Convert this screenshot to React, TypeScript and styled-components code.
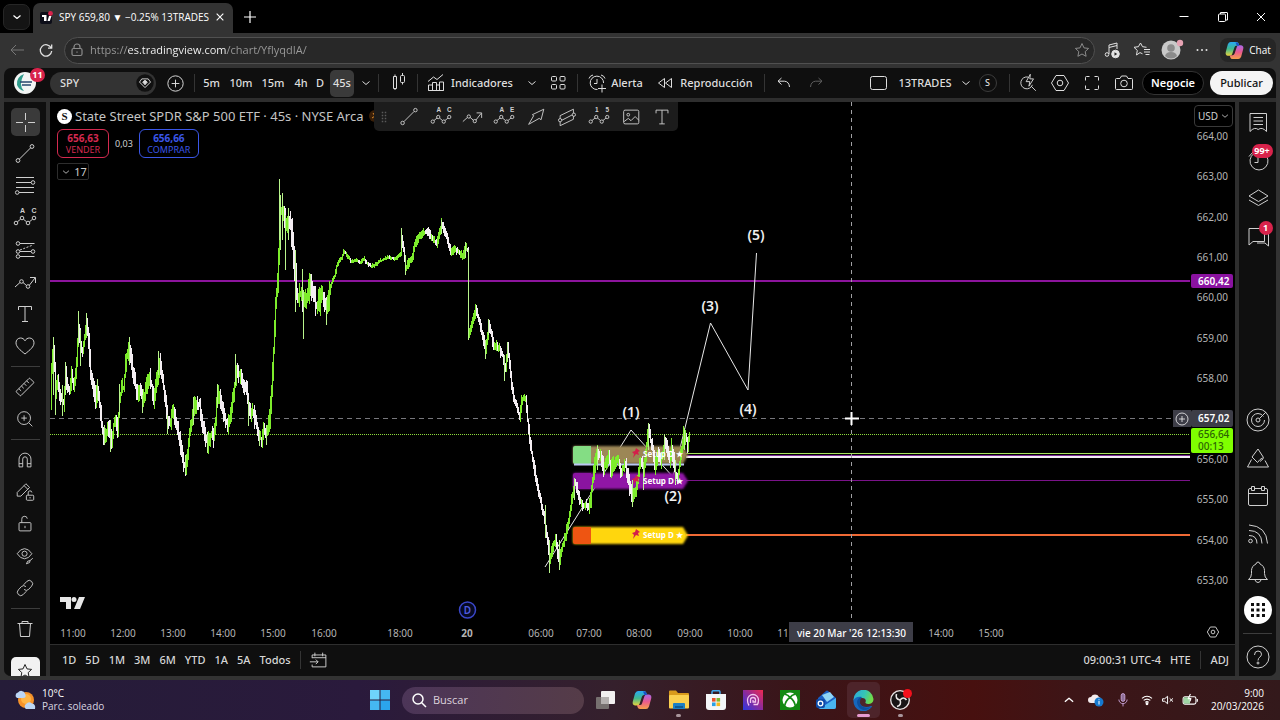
import React from 'react';
import styled, { createGlobalStyle, css } from 'styled-components';

const UI = '"Noto Sans", "Open Sans", sans-serif';
const SYS = '"Open Sans", "Noto Sans", sans-serif';

const GlobalStyle = createGlobalStyle`
  *, *::before, *::after { box-sizing: border-box; }
  body { margin: 0; background: #000; color: #d6d6d6; font-family: ${UI}; font-size: 11px; line-height: 16px; }
  button, input, select { font: inherit; color: inherit; }
  button { margin: 0; padding: 0; border: 0; background: none; display: inline-flex; align-items: center; justify-content: center; white-space: nowrap; }
  svg { display: block; flex: none; }
`;

/* ---------- icons ---------- */

type IconName =
  | 'down' | 'up' | 'close' | 'plus' | 'min' | 'restore' | 'back' | 'reload' | 'padlock' | 'star' | 'music' | 'favs' | 'dots'
  | 'gem' | 'plusCircle' | 'candles' | 'indicators' | 'grid' | 'alarm' | 'rewind' | 'undo' | 'redo' | 'square' | 'quick'
  | 'hex' | 'fullscreen' | 'camera' | 'cross' | 'trend' | 'fib' | 'abc' | 'fork' | 'path' | 'text' | 'heart' | 'ruler'
  | 'zoom' | 'magnet' | 'pencilLock' | 'lock' | 'eye' | 'link' | 'trash' | 'abcde' | 'arrow' | 'channel' | 'impulse'
  | 'image' | 'grip' | 'watchlist' | 'clock' | 'layers' | 'chat' | 'radar' | 'pyramid' | 'calendar' | 'feed' | 'bell'
  | 'apps' | 'help' | 'goto' | 'search' | 'mic' | 'wifi' | 'mute' | 'battery';

const zig = (
  <>
    <circle cx="3" cy="17" r="1.8" /><circle cx="9" cy="12" r="1.8" /><circle cx="15" cy="17" r="1.8" /><circle cx="21" cy="12" r="1.8" />
    <path d="M4.4 15.8l3.2-2.6M10.4 13.2l3.2 2.6M16.4 15.8l3.2-2.6" />
  </>
);
const pair = (a: string, b: string) => (
  <g fill="currentColor" stroke="none" fontFamily="Liberation Sans, sans-serif" fontWeight="700" fontSize="7" textAnchor="middle">
    <text x="9.500" y="7">{a}</text>
    <text x="21" y="7">{b}</text>
  </g>
);

const glyphs: Record<IconName, React.ReactNode> = {
  down: <path d="M8.500 10.500l3.500 3 3.500-3" />,
  up: <path d="M7.500 14l4.500-4 4.500 4" />,
  close: <path d="M8 8l8 8M16 8l-8 8" />,
  plus: <path d="M12 6v12M6 12h12" />,
  min: <path d="M7.500 11.500h9" />,
  restore: <><rect x="7.500" y="9" width="7" height="7.500" rx="1" /><path d="M9.500 9V7.500h6.500q.5 0 .5.500V15h-2" /></>,
  back: <path d="M6 12h13M11 7l-5 5 5 5" />,
  reload: <path d="M17.200 10A5.700 5.700 0 1 0 17.700 13M17.700 6.500V10.200H14" />,
  padlock: <><rect x="7" y="10.500" width="10" height="7" rx="1.500" /><path d="M9 10.500V9a3 3 0 0 1 6 0v1.500M12 13.500v1.200" /></>,
  star: <path d="M12 5.500l2 4.400 4.600.5-3.400 3.200.9 4.700L12 16l-4.100 2.300.9-4.700-3.400-3.200 4.600-.5z" />,
  music: <><path d="M9 16V7l8-2v6M9 9.500l8-2" /><circle cx="7" cy="16.500" r="1.800" /><circle cx="15.500" cy="16" r="3.800" fill="currentColor" /><path d="M14.500 14.300v3.400l2.700-1.700z" fill="#222" stroke="none" /></>,
  favs: <><path d="M12.500 15.800L10 14.600 6.500 17l.8-4.600L4 9.300l4.400-.6L10.500 5l2 3.700 4 .6" /><path d="M14 11.500h6M14 14h6M15.500 16.500h4" /></>,
  dots: <g fill="currentColor" stroke="none"><circle cx="7.500" cy="12" r="1" /><circle cx="12" cy="12" r="1" /><circle cx="16.500" cy="12" r="1" /></g>,
  gem: <><circle cx="12" cy="12" r="9.500" fill="#111" stroke="none" /><path d="M8.500 7.500h7l2.500 3.500-6 6-6-6z" /><path d="M9.500 11l2.500-2 2.500 2-2.500 3z" fill="currentColor" /></>,
  plusCircle: <><circle cx="12" cy="12" r="8" /><path d="M12 8v8M8 12h8" /></>,
  candles: <><rect x="7.500" y="5.500" width="3" height="12" /><path d="M9 3.500v2M9 17.500V19" /><rect x="14.500" y="4.500" width="4" height="7" rx="1" /><path d="M16.500 2v2.500M16.500 11.500v2" /></>,
  indicators: <><path d="M4.500 19.500V14h4v5.500zM8.500 19.500v-8h4v8M12.500 14h3v5.500M15.500 19.500V11h4v8.500zM4.500 19.500h15" /><path d="M4 10.500L9.500 6l3.500 2.500 6-5" /></>,
  grid: <><rect x="5.500" y="5.500" width="5" height="4.500" rx="1" /><rect x="14" y="5.500" width="5" height="4.500" rx="1" /><rect x="5.500" y="13.500" width="5" height="4.500" rx="1" /><rect x="14" y="13.500" width="5" height="4.500" rx="1" /></>,
  alarm: <><path d="M18.600 12A6.700 6.700 0 1 0 12.500 18.500" /><path d="M12 8v4.500H9M4 7.500Q5 4.500 8 4M16 4q3 .5 4 3.500M17 13.500v8M13 17.500h8" /></>,
  rewind: <path d="M11.500 7.500v9L5.500 12zM18.500 7.500v9l-6-4.500z" />,
  undo: <path d="M9.500 7L6 10.200l3.500 3.300M6 10.200h6.500Q17 10.500 17.500 16" />,
  redo: <path d="M14.500 7l3.500 3.200-3.500 3.300M18 10.200h-6.500Q7 10.500 6.500 16" />,
  square: <rect x="3.500" y="5.500" width="16" height="13" rx="2" />,
  quick: <><path d="M12 5.500A6.500 6.500 0 1 0 16.800 14M15.500 15.500l5 5" /><path d="M14.500 2.500L10 10.500h4l-1 5 5-8h-4z" /></>,
  hex: <><path d="M8 4.500h8l4.500 7.500-4.500 7.500H8L3.500 12z" /><circle cx="12" cy="12" r="2.800" /></>,
  fullscreen: <path d="M5.500 9.500v-3q0-1 1-1h3M14.500 5.500h3q1 0 1 1v3M18.500 14.500v3q0 1-1 1h-3M9.500 18.500h-3q-1 0-1-1v-3" />,
  camera: <><path d="M4.500 7.500h3.500l1.500-2.500h5L16 7.500h3.500q1 0 1 1v9q0 1-1 1h-15q-1 0-1-1v-9q0-1 1-1z" /><circle cx="12" cy="12.500" r="3.300" /></>,
  cross: <path d="M3 12.500h7M15 12.500h7M12.500 3v7M12.500 15v7" />,
  trend: <><circle cx="5" cy="18.500" r="1.900" /><circle cx="19" cy="4.500" r="1.900" /><path d="M6.400 17.100L17.600 5.900" /></>,
  fib: <><path d="M3 3.500h18M3 8.500h15M3 13.500h18M6 18.500h15" /><circle cx="20" cy="8.500" r="1.800" /><circle cx="4.200" cy="18.500" r="1.800" /></>,
  abc: <>{zig}{pair('A', 'C')}</>,
  abcde: <>{zig}{pair('A', 'E')}</>,
  impulse: <>{zig}{pair('1', '5')}</>,
  fork: <><circle cx="5" cy="5.500" r="1.800" /><circle cx="5" cy="13.500" r="1.800" /><circle cx="20" cy="13.500" r="1.800" /><circle cx="5" cy="18.500" r="1.800" /><path d="M7 5.500h14.500M7 13.500h11M7 18.500h14.500" /><path d="M7 12l13-5" strokeDasharray="2 1.500" /></>,
  path: <><path d="M2 17l5-4.500M10 12.500l3.500 3M16.300 15.300L22 8M17 7.500h5.500V13" /><circle cx="8.500" cy="11.500" r="1.800" /><circle cx="15" cy="16.500" r="1.800" /></>,
  text: <path d="M5.500 8V4.500h13V8M12 4.500v15M9 19.500h6" />,
  heart: <path d="M12 20C7 16 3 12.800 3 8.800 3 6 5 4 7.500 4 9.500 4 11 5 12 6.800 13 5 14.500 4 16.500 4 19 4 21 6 21 8.800c0 4-4 7.200-9 11.200z" />,
  ruler: <g transform="rotate(-45 12 12)"><rect x="1.500" y="8.500" width="21" height="7" rx="1" /><path d="M6 8.500V12M10 8.500V12M14 8.500V12M18 8.500V12" /></g>,
  zoom: <><circle cx="11" cy="11" r="7" /><path d="M16 16l4 4M11 8v6M8 11h6" /></>,
  magnet: <><path d="M5.500 19.500V11a6.500 6.500 0 0 1 13 0v8.500h-4V11a2.500 2.500 0 0 0-5 0v8.500zM5.500 16h4M14.500 16h4" /></>,
  pencilLock: <><path d="M3.500 16.500v-4L13 3l4 4-9.500 9.500zM11 5l4 4" /><rect x="13.500" y="15.500" width="8" height="5.500" rx="1" /><path d="M15.500 15.500V13a2 2 0 0 1 4-.5M17.500 17.500v1.500" /></>,
  lock: <><rect x="5.500" y="10.500" width="13" height="9" rx="1" /><path d="M8.500 10.500V7a3 3 0 0 1 6-.8M12 14v2.500" /></>,
  eye: <><path d="M3.500 9.500Q7 4 11.500 4t8 5.500Q16 15 11.500 15t-8-5.500z" /><circle cx="11.500" cy="9.500" r="2.800" /><path d="M13.500 20.500q1-4 4-3.500 1 2.500-4 3.500zM17.500 17l3-2.500" /></>,
  link: <><path d="M10.500 8.500l3.500-3.700a3.600 3.600 0 0 1 5.200 5.200L16 13.500a3.600 3.600 0 0 1-5 0" /><path d="M13.500 15.500L10 19.200A3.600 3.600 0 0 1 4.800 14L8 10.500a3.600 3.600 0 0 1 5 0" /></>,
  trash: <path d="M4.500 6.500h15M9 6.500v-2h6v2M6.500 6.500l1 13h9l1-13" />,
  arrow: <path d="M4 20l5.500-9.500L8 9.500 20.500 3.500 17.500 15l-2-1.500z" />,
  channel: <><path d="M4.500 10.500L19 3.500v11l-14.500 7z M5.500 16L19 9" /><circle cx="4.500" cy="15.500" r="1.800" fill="#1c1c1c" /><circle cx="19.500" cy="9.500" r="1.800" fill="#1c1c1c" /></>,
  image: <><rect x="4" y="4.500" width="16.500" height="15" rx="1.500" /><circle cx="9" cy="9.500" r="1.500" /><path d="M4.500 17l4.500-3.500 3 2.500 4.500-4.500 4 4" /></>,
  grip: <g fill="#5a5a5a" stroke="none">{[6, 10, 14, 18].map((y) => <React.Fragment key={y}><rect x="9" y={y - 1} width="2" height="2" /><rect x="13" y={y - 1} width="2" height="2" /></React.Fragment>)}</g>,
  watchlist: <path d="M4 3.500h16.500v18Q16 16.500 12.200 19.500 8.500 16.500 4 21.500zM7.500 7.500h9.500M7.500 11h9.500M7.500 14.500h9.500" />,
  clock: <><path d="M18 5.500a9 9 0 1 1-10 0M12 8.500v6H8.500M3 8.500L7 4" /></>,
  layers: <path d="M12.500 4L22 10l-9.500 5.500L3 10zM3 14l9.500 5.500L22 14" />,
  chat: <><path d="M3 4.500h15.500v13H7l-4 3.500z" /><path d="M21 9.500h1.500V22l-3.500-3h-8" /></>,
  radar: <><circle cx="12" cy="12" r="11" /><circle cx="12" cy="12" r="6.500" strokeDasharray="36 5" /><circle cx="12" cy="12" r="2" /><path d="M13.500 10.500L20 4" /></>,
  pyramid: <path d="M12 3l5.500 8.500-3.500 2-2.500 3-5.500-5.500zM5.500 13.500L1.500 21h21L19 14.500M14 15.500l3.500-3" />,
  calendar: <><rect x="2.500" y="4.500" width="19" height="17" rx="1.500" /><path d="M2.500 9.500h19" /><rect x="5.500" y="2.500" width="3" height="4" fill="#0f0f0f" /><rect x="15.500" y="2.500" width="3" height="4" fill="#0f0f0f" /></>,
  feed: <><circle cx="4.500" cy="19" r="1.800" /><path d="M3 13.500q8 0 8 8M3 8.500q12.500 0 13 13M3 3Q20.500 4 21.500 21.500" /></>,
  bell: <path d="M2.500 19.500h19q-3-2-3-6v-3c0-3-2-5.500-4.500-6.500Q13.500 2 12 2t-2 2C7.500 5 5.500 7.500 5.500 10.500v3q0 4-3 6zM9 20q1 2.500 3 2.500T15 20" />,
  apps: <g fill="#0f0f0f" stroke="none">{[5, 10.500, 16].map((y) => [5, 10.500, 16].map((x) => <rect key={`${x}-${y}`} x={x} y={y} width="3" height="3" />))}</g>,
  help: <><circle cx="12" cy="12" r="11" /><path d="M8.500 10q0-4 3.500-4t3.500 3.200c0 2.800-3.500 3-3.500 6.300" /><circle cx="12" cy="18" r="1" /></>,
  goto: <><path d="M4.500 10V6.500h15v13h-15V17M7.500 4v4M16 4v4M4.500 9.500h15M2 14h9M8.500 11.500L11 14l-2.500 2.500" /></>,
  search: <><circle cx="11" cy="11" r="5" /><path d="M14.700 14.700L19 19" /></>,
  mic: <><rect x="10" y="5" width="4" height="8.500" rx="2" fill="#8d6f96" /><path d="M7.500 11.500a4.500 4.500 0 0 0 9 0M12 16v3" /></>,
  wifi: <><path d="M6 10q6-5 12 0M8 12.500q4-3.300 8 0M10 14.800q2-1.600 4 0" /><circle cx="12" cy="16.500" r="1" fill="currentColor" /></>,
  mute: <><path d="M5.500 10.500h2.500l3.500-3v9l-3.500-3H5.500zM14 10l4 4M18 10l-4 4" /></>,
  battery: <><rect x="4.500" y="8.500" width="14" height="8" rx="2" /><rect x="5" y="9" width="7" height="7" fill="#9fd6a4" stroke="none" /><path d="M20 11v3" /><path d="M12.500 5.500L10 10.500h3l-1 3" stroke="#fff" /></>,
};

const Icon = ({ name, size = 24, weight = 1 }: { name: IconName; size?: number; weight?: number }) => (
  <svg width={size} height={size} viewBox="0 0 24 24" fill="none" stroke="currentColor" strokeWidth={weight} strokeLinejoin="round" aria-hidden="true">
    {glyphs[name]}
  </svg>
);

/* ---------- browser chrome ---------- */

const Shell = styled.div`display: flex; flex-direction: column; height: 100vh; min-height: 560px; overflow: hidden;`;

const TitleBar = styled.header`
  display: flex; align-items: flex-end; height: 33px; flex: none; padding-left: 3px; background: #000;
  font-family: ${SYS}; color: #fff;
`;
const TabSearch = styled.button`width: 27px; height: 26px; margin: 0 3px 3px 0; border: 1px solid #262626; border-radius: 7px; background: #141414; align-self: flex-end;`;
const Tab = styled.div`display: flex; align-items: center; width: 200px; height: 30px; padding: 0 4px 2px 7px; border-radius: 7px 7px 0 0; background: #333;`;
const TabTitle = styled.span`flex: 1; padding-left: 6px; font-size: 10px; white-space: nowrap;`;
const WindowControls = styled.div`display: flex; margin-left: auto; height: 33px;`;
const IconButton = styled.button<{ $w?: number; $h?: number; $c?: string }>`
  width: ${(p) => p.$w ?? 24}px; height: ${(p) => p.$h ?? 24}px; flex: none; color: ${(p) => p.$c ?? 'inherit'};
`;

const AddressRow = styled.div`
  display: flex; align-items: center; height: 34px; flex: none; padding: 0 4px 0 5px; background: #333; color: #e2e2e2; font-family: ${SYS};
`;
const AddressBox = styled.label`
  display: flex; align-items: center; flex: 1; height: 27px; margin-left: 1px; padding: 0;
  border: 1px solid #505050; border-radius: 14px; background: #282828; color: #8c8c8c;
`;
const UrlInput = styled.input`
  flex: 1; min-width: 0; border: 0; padding: 0; margin-left: 1px; outline: 0; font-size: 11px; color: #fff;
  background: linear-gradient(90deg, #9c9c9c 0 38px, #fff 38px 137px, #9c9c9c 137px);
  background-clip: text; -webkit-background-clip: text; -webkit-text-fill-color: transparent;
`;
const Actions = styled.div`display: flex; align-items: center; gap: 6px; padding-left: 5px;`;
const CopilotChat = styled.button`gap: 5px; height: 24px; width: 56px; border-radius: 8px; background: #262626; font-size: 10px; color: #fff;`;

/* ---------- trading page ---------- */

const Frame = styled.div`flex: 1; min-height: 0; display: flex; padding: 1px 4px 4px 4px; background: #333;`;
const Page = styled.div`display: flex; flex-direction: column; flex: 1; min-width: 0; border-radius: 7px; overflow: hidden; background: #0f0f0f;`;
const TopBar = styled.nav`
  display: flex; align-items: center; height: 30px; flex: none; padding: 0 3px 0 10px; font-size: 11px; font-weight: 500; color: #dedede;
`;
const Avatar = styled.button`
  position: relative; width: 22px; height: 22px; border-radius: 50%; background: #f2f5f4; margin-right: 14px;
`;
const Badge = styled.span<{ $top: number; $right: number; $w?: number }>`
  position: absolute; top: ${(p) => p.$top}px; right: ${(p) => p.$right}px; width: ${(p) => p.$w ?? 14}px; height: 14px; border-radius: 7px;
  background: #d8234b; color: #fff; font-size: 9px; font-weight: 700; line-height: 14px; text-align: center;
`;
const SymbolButton = styled.button`
  width: 106px; height: 23px; padding: 0 0 0 10px; border-radius: 12px; background: #333; justify-content: space-between;
`;
const Sep = styled.i<{ $m?: number; $h?: number }>`width: 1px; height: ${(p) => p.$h ?? 18}px; flex: none; margin: 0 ${(p) => p.$m ?? 0}px; background: #343434;`;
const BarButton = styled.button<{ $w: number; $on?: boolean; $gap?: number }>`
  width: ${(p) => p.$w}px; height: 27px; flex: none; gap: ${(p) => p.$gap ?? 0}px; border-radius: 5px;
  ${(p) => p.$on && css`background: #3a3a3a;`}
`;
const Round = styled.span`width: 18px; height: 18px; border: 1px solid #3c3c3c; border-radius: 50%; font-size: 9px; line-height: 16px; text-align: center;`;
const Pill = styled.button<{ $light?: boolean; $w: number }>`
  width: ${(p) => p.$w}px; height: 24px; border-radius: 12px; font-size: 11px; font-weight: 600;
  & + & { margin-left: 6px; }
  ${(p) => (p.$light ? css`background: #f4f4f4; color: #111; font-weight: 500;` : css`background: #000; color: #fff; border: 1px solid #333;`)}
`;
const Grow = styled.div`flex: 1;`;

const Body = styled.div`
  flex: 1; min-height: 0; display: grid; grid-template-columns: 42px minmax(0, 1fr) 37px; gap: 4px; border-top: 4px solid #2e2e2e; background: #2e2e2e;
`;
const Side = styled.aside<{ $top: number }>`
  display: flex; flex-direction: column; align-items: center; min-height: 0; overflow: hidden; padding-top: ${(p) => p.$top}px; background: #0f0f0f; color: #cfcfcf;
`;
const Tool = styled.button<{ $on?: boolean }>`
  width: 29px; height: 28px; margin: 2px 0; flex: none; border-radius: 5px;
  ${(p) => p.$on && css`background: #3a3a3a;`}
`;
const FavButton = styled(Tool)`margin-top: 12px; background: #f2f2f2; color: #222;`;
const SideRule = styled.i`width: 29px; height: 1px; flex: none; margin: 4px 0; background: #3d3d3d;`;
const Widget = styled.button<{ $light?: boolean }>`
  position: relative; width: 28px; height: 28px; margin: 5px 0; flex: none; border-radius: 50%;
  ${(p) => p.$light && css`background: #fff;`}
`;

const Center = styled.main`display: flex; flex-direction: column; min-width: 0; min-height: 0; background: #000;`;
const ChartArea = styled.section`position: relative; flex: 1; min-height: 0; display: grid; grid-template-columns: minmax(0, 1fr) 45px; grid-template-rows: minmax(0, 1fr) 24px; overflow: hidden;`;
const Plot = styled.svg`width: 100%; height: 100%; min-height: 0; overflow: hidden; font-family: ${UI};`;
const Scale = styled.div`
  position: relative; display: flex; flex-direction: column; justify-content: space-between; padding: 26px 7px 32px 0; text-align: right;
  font-size: 10px; line-height: 16px; color: #b4b4b4;
`;
const PriceTag = styled.div<{ $y: number; $bg: string; $fg?: string; $h?: number }>`
  position: absolute; top: ${(p) => p.$y}px; left: 1px; width: 42px; height: ${(p) => p.$h ?? 14}px; padding-left: 7px; border-radius: 2px; text-align: left;
  background: ${(p) => p.$bg}; color: ${(p) => p.$fg ?? '#fff'}; font-weight: ${(p) => (p.$fg ? 500 : 600)}; line-height: ${(p) => (p.$h === 25 ? 12 : p.$h ?? 14)}px;
`;
const AddAtPrice = styled.button`position: absolute; top: 308px; left: -17px; width: 18px; height: 17px; background: #3d3d47; color: #fff;`;
const Currency = styled.div`
  position: absolute; top: 3px; right: 2px; width: 39px; height: 22px; border: 1px solid #3a3a3a; border-radius: 4px; background: #000; display: flex; align-items: center; color: #cfcfcf;
  select { appearance: none; width: 100%; height: 20px; padding: 0 0 0 3px; border: 0; background: none; font-size: 10px; outline: 0; }
  svg { position: absolute; right: -3px; pointer-events: none; }
`;
const AxisSettings = styled.button`height: 24px; width: 45px; color: #c4c4c4;`;

const Legend = styled.div`position: absolute; top: 5px; left: 7px; display: flex; flex-direction: column; align-items: flex-start;`;
const TitleRow = styled.h1`display: flex; align-items: center; gap: 3px; height: 18px; margin: 0 0 4px; font-size: 13px; font-weight: 400; color: #c4c4c4; white-space: nowrap;`;
const Logo = styled.span`width: 15px; height: 15px; border-radius: 50%; background: #fff; color: #111; font: 700 11px/15px "Liberation Serif", serif; text-align: center;`;
const Trade = styled.div`display: flex; align-items: center; gap: 6px; margin-bottom: 5px; font-size: 9px; color: #cfcfcf;`;
const TradeButton = styled.button<{ $c: string; $w: number }>`
  flex-direction: column; width: ${(p) => p.$w}px; height: 29px; border: 1px solid ${(p) => p.$c}; border-radius: 6px; color: ${(p) => p.$c};
  font-size: 9px; line-height: 11px;
  b { font-size: 10px; line-height: 12px; }
`;
const Fold = styled.button`width: 32px; height: 17px; border: 1px solid #2d2d2d; border-radius: 2px; font-size: 11px; color: #cfcfcf; padding-right: 3px;
  svg { margin-right: -2px; }
`;
const DrawBar = styled.div`
  position: absolute; top: 0; left: 324px; display: flex; align-items: center; width: 304px; height: 29px; border-radius: 0 0 5px 5px; background: #1c1c1c; color: #cfcfcf;
`;
const DrawTool = styled.button`flex: 1; height: 29px;`;
const GripHandle = styled.span`width: 19px; display: flex; justify-content: center;`;

const RangeBar = styled.footer`
  display: flex; align-items: center; height: 32px; flex: none; padding: 0 2px 2px 7px; border-top: 1px solid #2e2e2e; background: #0f0f0f; font-size: 11px; font-weight: 500; color: #d6d6d6;
`;
const RangeButton = styled.button`padding: 0 4px 0 5px; height: 24px;`;

/* ---------- chart data ---------- */

// x, y pairs along the session's price path
const trail = [
  50,400, 51,365, 53,350, 55,392, 57,378, 59,392, 61,398, 63,403, 65,372, 67,388, 69,392, 71,372, 73,386, 75,374, 77,345, 78,325, 80,346, 82,352,
  84,336, 86,322, 88,342, 90,372, 92,386, 94,393, 95,400, 97,388, 99,405, 101,423, 103,436, 105,438, 107,428, 109,432, 111,440, 113,424, 115,420,
  117,432, 119,402, 121,388, 123,388, 125,362, 127,352, 129,350, 131,362, 133,374, 135,386, 137,398, 139,388, 142,402, 144,394, 146,386, 149,377,
  151,386, 153,400, 155,388, 157,376, 159,362, 161,372, 163,388, 165,403, 167,422, 169,424, 171,416, 173,412, 175,420, 178,436, 180,445, 182,460,
  184,466, 185,470, 187,456, 189,430, 191,422, 193,408, 195,404, 197,404, 199,404, 201,420, 203,430, 205,438, 207,444, 209,438, 211,434, 213,438,
  215,420, 217,394, 219,396, 221,405, 224,418, 227,426, 230,416, 232,400, 234,386, 236,368, 238,376, 240,376, 243,384, 246,390, 248,408, 250,414,
  252,410, 254,420, 257,430, 259,438, 261,438, 263,432, 265,434, 267,428, 269,416, 271,390, 273,352, 275,305, 277,285, 278,255, 279,215, 281,210,
  283,212, 285,230, 287,222, 289,222, 291,232, 293,255, 295,278, 297,300, 299,296, 301,292, 303,302, 305,300, 308,290, 310,284, 312,292, 315,304,
  317,304, 320,300, 322,298, 324,304, 326,312, 328,300, 330,286, 332,280, 334,276, 336,266, 338,261, 341,258, 343,251, 346,254, 350,261, 355,260,
  360,262, 363,258, 367,264, 370,266, 375,264, 380,260, 388,257, 395,258, 400,254, 401,238, 403,250, 405,268, 408,262, 412,257, 414,244, 418,237,
  422,232, 427,232, 432,238, 436,244, 439,232, 441,223, 443,230, 447,240, 450,252, 454,249, 458,252, 462,257, 465,248, 467,250, 468,334, 470,330,
  473,318, 475,309, 478,320, 482,335, 485,352, 487,335, 488,326, 491,334, 493,348, 496,346, 499,350, 502,356, 505,370, 507,348, 508,356, 511,385,
  513,400, 516,405, 519,417, 521,400, 525,398, 527,420, 529,440, 532,458, 535,478, 540,500, 544,520, 547,542, 549,562, 551,552, 555,538, 557,553,
  559,560, 561,550, 565,535, 568,520, 571,500, 574,483, 576,487, 579,500, 582,505, 585,505, 588,508, 590,500, 592,480, 594,465, 597,453, 600,456,
  603,468, 606,460, 608,456, 610,469, 613,463, 616,461, 618,460, 621,474, 624,463, 626,470, 629,488, 631,496, 632,500, 635,490, 638,470, 640,460,
  643,470, 645,455, 647,436, 648,430, 650,440, 652,450, 654,466, 657,455, 660,463, 662,454, 664,440, 666,448, 669,459, 671,447, 673,460, 675,476,
  677,478, 679,466, 681,450, 683,434, 685,437, 687,444, 689,436,
];
// wicks that reach well beyond the path: x, high, low
const spikes = [
  [53, 337, 395], [55, 380, 415], [62, 385, 416], [65, 362, 395], [78, 311, 345], [80, 330, 366], [86, 313, 335], [104, 425, 445], [110, 420, 452], [97, 379, 400],
  [129, 337, 365], [119, 384, 415], [142, 395, 413], [158, 351, 375], [167, 415, 434], [185, 455, 474], [193, 397, 425], [207, 435, 453], [217, 384, 408], [235, 354, 385],
  [248, 400, 426], [259, 430, 446], [266, 425, 445], [279, 179, 240], [280, 195, 250], [282, 193, 240], [285, 215, 270], [288, 208, 240], [302, 269, 300],
  [303, 290, 339], [310, 274, 296], [326, 300, 325], [295, 250, 312], [401, 228, 250], [405, 255, 275], [441, 220, 234], [465, 242, 258], [468, 250, 340],
  [485, 340, 359], [488, 319, 335], [504, 355, 381], [507, 342, 362], [545, 505, 538], [549, 540, 573], [559, 540, 570], [574, 478, 500], [597, 446, 470],
  [632, 480, 507], [643, 462, 490], [648, 423, 450], [664, 434, 460], [675, 460, 484], [684, 428, 450],
];

const hash = (n: number) => { const v = Math.sin(n * 12.9898) * 43758.5453; return v - Math.floor(v); };
const spread = (x: number) => (x < 270 ? 9 : x < 330 ? 14 : x < 400 ? 2 : x < 467 ? 4 : x < 590 ? 5 : 8);
const OX = 50, OY = 102;

const bars = (() => {
  let up = '', down = '';
  let k = 0;
  const at = (x: number) => {
    while (k < trail.length - 4 && trail[k + 2] < x) k += 2;
    const [x0, y0, x1, y1] = trail.slice(k, k + 4);
    return y0 + ((y1 - y0) * (x - x0)) / (x1 - x0);
  };
  let prev = at(50);
  for (let x = 51; x <= 689; x++) {
    const y = at(x);
    const s = spread(x);
    const pad = s > 2 ? 1 : 0;
    const hi = Math.min(prev, y) - pad - hash(x) * s;
    const lo = Math.max(prev, y) + 1 + hash(x + 500) * s;
    const seg = `M${x - OX + 0.5} ${Math.round(hi) - OY}V${Math.round(lo) - OY}`;
    const rising = y < prev || (Math.abs(y - prev) < 2 && hash(x + 90) > 0.5);
    if (rising) up += seg; else down += seg;
    prev = y;
  }
  return { up, down };
})();

const hours: [string, number][] = [
  ['11:00', 23], ['12:00', 73], ['13:00', 123], ['14:00', 173], ['15:00', 223], ['16:00', 274], ['18:00', 350], ['20', 417], ['06:00', 491],
  ['07:00', 539], ['08:00', 589], ['09:00', 640], ['10:00', 690], ['11', 733], ['14:00', 891], ['15:00', 941],
];
const waves: [string, number, number][] = [['(1)', 581, 315], ['(2)', 623, 399], ['(3)', 660, 209], ['(4)', 698, 312], ['(5)', 706, 138]];
const prices = Array.from({ length: 12 }, (_, i) => `${664 - i},00`);

const SetupBand = ({ y, h, head, fill }: { y: number; h: number; head: string; fill: string }) => (
  <g>
    <path d={`M525 ${y}h108l5 ${h / 2}l-5 ${h / 2}H525q-2 0-2-2V${y + 2}q0-2 2-2z`} fill={fill} filter="url(#soft)" />
    <path d={`M541 ${y}v${h}h-16q-2 0-2-2V${y + 2}q0-2 2-2z`} fill={head} />
  </g>
);
const SetupText = ({ y }: { y: number }) => (
  <g>
    <path d={`M582 ${y - 2}l3-1 1-3 4 3-2 1 1 3-3-1-3 4 1-4z`} fill="#d3204a" />
    <text x="593" y={y + 3} fontSize="8" fontWeight="700" fill="#fff">Setup D ★</text>
  </g>
);

const Chart = () => (
  <Plot role="img" aria-label="SPY 45s">
    <defs>
      <filter id="soft" x="-5%" y="-20%" width="110%" height="140%"><feGaussianBlur stdDeviation="0.9" /></filter>
      <linearGradient id="sell" x1="0" x2="1"><stop offset="0" stopColor="#a08a5c" /><stop offset="1" stopColor="#98834f" /></linearGradient>
    </defs>
    <line x1="0" x2="100%" y1="179" y2="179" stroke="#8c149c" strokeWidth="2" />
    <line x1="0" x2="100%" y1="316.500" y2="316.500" stroke="#77777c" strokeDasharray="5 4" />
    <line x1="0" x2="100%" y1="332.500" y2="332.500" stroke="#8ddb3c" strokeDasharray="1 1" />
    <g>
      <line x1="636" x2="100%" y1="351.500" y2="351.500" stroke="#a6e05c" />
      <line x1="636" x2="100%" y1="353.500" y2="353.500" stroke="#7b2a96" />
      <line x1="636" x2="100%" y1="355" y2="355" stroke="#f4eef6" strokeWidth="2" />
      <line x1="636" x2="100%" y1="378.500" y2="378.500" stroke="#7a1389" />
      <line x1="636" x2="100%" y1="433" y2="433" stroke="#f06a35" strokeWidth="2" />
    </g>
    <path d="M495 465L581 328 623 375 660.500 221 698 288 706.500 151" fill="none" stroke="#e8e8e8" strokeWidth="1" />
    <SetupBand y={344} h={18} head="#84dd84" fill="url(#sell)" />
    <path d="M524 362.500H634" stroke="#b9c6f2" strokeWidth="2" />
    <SetupBand y={371} h={16} head="#8a14a0" fill="#9012a6" />
    <SetupBand y={425} h={17} head="#ee5512" fill="#ffd60a" />
    <path d={bars.down} stroke="#f4eef2" strokeWidth="1" />
    <path d={bars.up} stroke="#7dec2c" strokeWidth="1" />
    <path d={spikes.map(([x, a, b]) => `M${x - OX + 0.5} ${a - OY}V${b - OY}`).join('')} stroke="#b9f58c" strokeWidth="1" />
    <SetupText y={352} />
    <SetupText y={379} />
    <SetupText y={433} />
    <g fill="#f0f0f0" fontSize="14" fontWeight="600" textAnchor="middle">
      {waves.map(([t, x, y]) => <text key={t} x={x} y={y}>{t}</text>)}
    </g>
    <g transform="translate(10 495)" fill="#e6e6e6"><path d="M0 0h11v12H6V5H0z" /><circle cx="14" cy="2.500" r="2.500" /><path d="M19 0h6l-5 12h-6z" /></g>
    <circle cx="417.500" cy="508" r="8" fill="#060a22" stroke="#3a46c8" strokeWidth="1.500" />
    <text x="417.500" y="512" fontSize="10" fontWeight="600" fill="#4f5ce0" textAnchor="middle">D</text>
    <line x1="801.500" x2="801.500" y1="0" y2="100%" stroke="#a0a0a4" strokeDasharray="4 4" />
    <path d="M795 316.500h14M801.500 310v13" stroke="#fff" strokeWidth="2" />
  </Plot>
);

const TimeAxis = () => (
  <Plot role="img" aria-label="20 Mar 2026" fontSize="10">
    <g fill="#b4b4b4" textAnchor="middle">
      {hours.map(([t, x]) => <text key={x} x={x} y="17" fontWeight={t === '20' ? 700 : 400}>{t}</text>)}
    </g>
    <rect x="739" y="2" width="124" height="20" fill="#3d3d47" />
    <g fill="#fff" fontWeight="500">
      <text x="747" y="17">vie 20 Mar '26</text>
      <text x="856" y="17" textAnchor="end">12:13:30</text>
    </g>
  </Plot>
);

/* ---------- taskbar ---------- */

const Taskbar = styled.footer`
  display: grid; grid-template-columns: 1fr auto 1fr; align-items: center; height: 40px; flex: none; color: #fff; font-family: ${SYS}; font-size: 10px;
  background: linear-gradient(90deg, #251c38 0%, #2a1a3c 28%, #35202c 48%, #3a1519 62%, #47100f 76%, #3d1517 84%, #33191b 100%);
`;
const Weather = styled.button`justify-self: start; gap: 6px; padding-left: 14px; text-align: left;
  span { display: block; font-size: 10px; line-height: 13px; color: #d9d5e0; }
  span:first-child { color: #fff; }
`;
const Dock = styled.div`display: flex; align-items: center;`;
const DockButton = styled.button<{ $on?: boolean; $mark?: 'dot' | 'bar' }>`
  position: relative; width: 37px; height: 36px; border-radius: 5px;
  ${(p) => p.$on && css`background: #4d242a; width: 33px; margin: 0 2px;`}
  ${(p) => p.$mark && css`&::after { content: ''; position: absolute; bottom: 1px; width: ${p.$mark === 'bar' ? 13 : 5}px; height: 3px; border-radius: 2px; background: ${p.$mark === 'bar' ? '#e79bd0' : '#a9969c'}; }`}
`;
const SearchBox = styled.label`
  display: flex; align-items: center; width: 182px; height: 27px; margin: 0 2px 0 4px; padding-left: 5px; border-radius: 14px; background: linear-gradient(90deg, #4c3558, #553c48);
  input { flex: 1; min-width: 0; border: 0; outline: 0; background: none; padding: 0 0 0 2px; font-size: 11px; }
  input::placeholder { color: #ddd3dc; opacity: 1; }
`;
const Tray = styled.div`display: flex; align-items: center; justify-self: end; padding-right: 16px;`;
const Clock = styled.time`width: 54px; margin-left: 8px; text-align: right; font-size: 10px; line-height: 13px; white-space: nowrap;`;

const Copilot = ({ size }: { size: number }) => (
  <svg width={size} height={size} viewBox="0 0 20 20" aria-hidden="true">
    <defs>
      <linearGradient id="cpA" x1="0" y1="0" x2="0" y2="1"><stop offset="0" stopColor="#29a9f5" /><stop offset="0.500" stopColor="#3fb98f" /><stop offset="1" stopColor="#e8d23c" /></linearGradient>
      <linearGradient id="cpB" x1="0" y1="0" x2="0" y2="1"><stop offset="0" stopColor="#a968e8" /><stop offset="0.500" stopColor="#ec5a8d" /><stop offset="1" stopColor="#f7a04a" /></linearGradient>
    </defs>
    <path d="M6 1h6q2 0 2.500 2l.5 2h-3q-1.500 0-2 1.500L7.500 14Q7 15.500 5 15.500H3Q0 15 .8 11.500l2.200-8Q4 1 6 1z" fill="url(#cpA)" />
    <path d="M14 19H8q-2 0-2.500-2L5 15h3q1.500 0 2-1.500L12.500 6Q13 4.500 15 4.500h2q3 .5 2.200 4l-2.200 8Q16 19 14 19z" fill="url(#cpB)" />
    <path d="M11 1.500h1.500q1.500 0 2 2l.5 1.500h-2.500z" fill="#1b50c8" />
  </svg>
);

const appIcons: Record<string, React.ReactNode> = {
  start: <svg width="20" height="20" viewBox="0 0 20 20"><g fill="#45b8f2"><rect width="9.500" height="9.500" fill="#6fd3fb" /><rect x="10.500" width="9.500" height="9.500" /><rect y="10.500" width="9.500" height="9.500" /><rect x="10.500" y="10.500" width="9.500" height="9.500" fill="#2ba4ec" /></g></svg>,
  tasks: <svg width="20" height="20" viewBox="0 0 20 20"><rect x="6" y="1" width="14" height="13" rx="1" fill="#f2f0f0" /><rect x="1" y="7" width="13" height="12" rx="1" fill="#76706f" /><rect x="6" y="7" width="8" height="7" fill="#b5b1b0" /></svg>,
  files: <svg width="22" height="20" viewBox="0 0 22 20"><path d="M1 1.500q0-1 1-1h6l2 2.500h10q1 0 1 1v13H1z" fill="#d99a1c" /><rect x="1" y="5" width="20" height="13.500" rx="1" fill="#fbd050" /><path d="M5 19v-5q0-1 1-1h10q1 0 1 1v5z" fill="#1d7fc4" /><rect x="7" y="16" width="8" height="2" fill="#0f5a94" /></svg>,
  store: <svg width="20" height="20" viewBox="0 0 20 20"><path d="M6 5V2q0-1.300 1.300-1.300h5.400Q14 .7 14 2v3" fill="none" stroke="#42a5e8" strokeWidth="1.500" /><path d="M0 4h20v13q0 3-3 3H3q-3 0-3-3z" fill="#f4f6f8" /><rect x="6" y="8" width="3.600" height="3.600" fill="#e9512b" /><rect x="10.500" y="8" width="3.600" height="3.600" fill="#7db72f" /><rect x="6" y="12.500" width="3.600" height="3.600" fill="#2a9fe6" /><rect x="10.500" y="12.500" width="3.600" height="3.600" fill="#f5b81e" /></svg>,
  scanner: <svg width="20" height="20" viewBox="0 0 20 20"><defs><linearGradient id="pz" x1="0" y1="1" x2="1" y2="0"><stop offset="0" stopColor="#2b38e0" /><stop offset="0.500" stopColor="#8b2a9c" /><stop offset="1" stopColor="#f02a50" /></linearGradient></defs><rect width="20" height="20" fill="url(#pz)" /><g fill="none" stroke="#f3c6ee" strokeWidth="1.300"><path d="M6 15.500q-1.500-2-1.500-5.500a5.500 5.500 0 0 1 11 0q0 2.500-1 4.500h-4" /><path d="M7.500 13V10a2.500 2.500 0 0 1 5 0v2h-2.500v-2" /></g></svg>,
  xbox: <svg width="20" height="20" viewBox="0 0 20 20"><rect width="20" height="20" fill="#138a13" /><circle cx="10" cy="10" r="7.500" fill="#fff" /><path d="M4.500 4Q8.500 5 10 7.500 11.500 5 15.500 4M10 7.500Q5.500 10.500 4.500 16.500M10 7.500Q14.500 10.500 15.500 16.500" fill="none" stroke="#138a13" strokeWidth="1.700" /></svg>,
  mail: <svg width="21" height="20" viewBox="0 0 21 20"><path d="M2 8L10 1q1-1 2 0l8 7v9q0 2-2 2H4q-2 0-2-2z" fill="#1a5fc4" /><path d="M6 5l8-3 4 5-7 5z" fill="#8fd4f6" /><path d="M3 19L20 8v9q0 2-2 2z" fill="#49b4f0" /><rect x="0" y="9" width="9" height="9" rx="2" fill="#0e4ba8" /><circle cx="4.500" cy="13.500" r="2.300" fill="none" stroke="#fff" strokeWidth="1.300" /></svg>,
  edge: <svg width="21" height="21" viewBox="0 0 21 21"><defs><linearGradient id="eg" x1="0" y1="0" x2="1" y2="0.300"><stop offset="0" stopColor="#2aa7e0" /><stop offset="0.600" stopColor="#36c6b4" /><stop offset="1" stopColor="#6fdc4a" /></linearGradient></defs><path d="M.5 10.500A10 10 0 0 1 20.500 9c0 4-3 5-5.500 5-2 0-3-.8-2.500-2 1-2-.5-4-3-4-4 0-7.500 1-9 2.500z" fill="url(#eg)" /><path d="M.5 10.500C1.500 7.500 5 6 9 7c-3 1.500-3.500 5-1.500 7.500 2.500 3 7 3 10.500 1.500.8-.3 1.200.2.700.9A10 10 0 0 1 .5 10.500z" fill="#1667bd" /><path d="M9 7C6 7 3.500 10 4.200 13.500c.8 4 4.300 6.800 8 6.500 3-.5 5-2 6.500-3.200-6 2.200-11.700.2-11.700-4.800C7 9.500 8 8 9 7z" fill="#0e4f9e" /></svg>,
  obs: <svg width="24" height="22" viewBox="0 0 24 22"><circle cx="11" cy="11" r="9.300" fill="#191516" stroke="#e8e4e4" strokeWidth="1.300" /><g fill="none" stroke="#e8e4e4" strokeWidth="1.600"><path d="M11 11Q6 10 7.500 5" /><path d="M11 11q3.500-4 6.500 0" /><path d="M11 11q2 5-3 6.500" /></g><circle cx="18.500" cy="4.500" r="4.500" fill="#f3101c" /></svg>,
};

const left1: IconName[] = ['cross', 'trend', 'fib', 'abc', 'fork', 'path', 'text', 'heart'];
const left3: IconName[] = ['magnet', 'pencilLock', 'lock', 'eye', 'link'];
const draw: IconName[] = ['trend', 'abc', 'path', 'abcde', 'arrow', 'channel', 'impulse', 'image', 'text'];

export default function App() {
  return (
    <Shell>
      <GlobalStyle />
      <TitleBar>
        <TabSearch aria-label="Tabs"><Icon name="down" size={24} weight={1.2} /></TabSearch>
        <Tab>
          <svg width="13" height="13" viewBox="0 0 13 13"><rect y="1" width="12" height="12" rx="2" fill="#0c0d18" /><path d="M2 4h4.500v6H4V6H2zM9 5h2.500L9.800 10H7.500z" fill="#fff" /><circle cx="10.500" cy="2.500" r="2.400" fill="#d8234b" /></svg>
          <TabTitle>SPY 659,80 ▼ −0.25% 13TRADES</TabTitle>
          <IconButton aria-label="Close tab" $w={18} $h={18}><Icon name="close" size={20} weight={1.300} /></IconButton>
        </Tab>
        <IconButton aria-label="New tab" $w={34} $h={33}><Icon name="plus" weight={1.200} /></IconButton>
        <WindowControls>
          <IconButton aria-label="Minimize" $w={39} $h={33}><Icon name="min" /></IconButton>
          <IconButton aria-label="Restore" $w={39} $h={33}><Icon name="restore" /></IconButton>
          <IconButton aria-label="Close" $w={38} $h={33}><Icon name="close" /></IconButton>
        </WindowControls>
      </TitleBar>
      <AddressRow>
        <IconButton aria-label="Back" $c="#777"><Icon name="back" /></IconButton>
        <IconButton aria-label="Reload" $w={34}><Icon name="reload" weight={1.300} /></IconButton>
        <AddressBox>
          <Icon name="padlock" weight={1.200} />
          <UrlInput aria-label="URL" defaultValue="https://es.tradingview.com/chart/YflyqdIA/" />
          <Icon name="star" />
        </AddressBox>
        <Actions>
          <IconButton aria-label="Media"><Icon name="music" /></IconButton>
          <IconButton aria-label="Favorites"><Icon name="favs" /></IconButton>
          <IconButton aria-label="Profile">
            <svg width="24" height="22" viewBox="0 0 24 22"><circle cx="11" cy="11" r="9.500" fill="#c9c9c9" /><circle cx="11" cy="9" r="3.800" fill="#8b8b8b" /><path d="M5 17q1-4 6-4t6 4q-2.500 2.500-6 2.500T5 17z" fill="#8b8b8b" /><circle cx="20" cy="4" r="3.200" fill="#e7a3b4" /></svg>
          </IconButton>
          <IconButton aria-label="More"><Icon name="dots" /></IconButton>
          <CopilotChat><Copilot size={19} />Chat</CopilotChat>
        </Actions>
      </AddressRow>

      <Frame>
        <Page>
          <TopBar>
            <Avatar aria-label="Account">
              <svg width="22" height="22" viewBox="0 0 22 22"><path d="M10 2Q2 5 3 13q2 5 7 6Q4 13 10 2z" fill="#2f9c8c" /><path d="M6 10h12M8 13h9" stroke="#27476e" strokeWidth="1.500" /></svg>
              <Badge $top={-4} $right={-9} $w={15}>11</Badge>
            </Avatar>
            <SymbolButton>SPY<Icon name="gem" size={22} /></SymbolButton>
            <BarButton $w={38} aria-label="Compare"><Icon name="plusCircle" size={23} /></BarButton>
            <Sep />
            <BarButton $w={33}>5m</BarButton>
            <BarButton $w={26}>10m</BarButton>
            <BarButton $w={38}>15m</BarButton>
            <BarButton $w={18}>4h</BarButton>
            <BarButton $w={20}>D</BarButton>
            <BarButton $w={24} $on>45s</BarButton>
            <BarButton $w={24} aria-label="Intervals"><Icon name="down" /></BarButton>
            <Sep />
            <BarButton $w={38} aria-label="Candles"><Icon name="candles" /></BarButton>
            <Sep />
            <BarButton $w={101} $gap={3}><Icon name="indicators" />Indicadores</BarButton>
            <BarButton $w={26} aria-label="Favorite indicators"><Icon name="down" /></BarButton>
            <BarButton $w={26} aria-label="Templates"><Icon name="grid" /></BarButton>
            <Sep $m={6} />
            <BarButton $w={60} $gap={2}><Icon name="alarm" />Alerta</BarButton>
            <BarButton $w={118} $gap={3}><Icon name="rewind" />Reproducción</BarButton>
            <Sep $m={2} />
            <BarButton $w={34} aria-label="Undo"><Icon name="undo" /></BarButton>
            <IconButton aria-label="Redo" $w={30} $c="#5e5e5e"><Icon name="redo" /></IconButton>
            <Grow />
            <BarButton $w={22} aria-label="Layout"><Icon name="square" /></BarButton>
            <BarButton $w={70}>13TRADES</BarButton>
            <BarButton $w={12} aria-label="Layouts"><Icon name="down" /></BarButton>
            <BarButton $w={31} aria-label="Save"><Round>S</Round></BarButton>
            <Sep $m={6} />
            <BarButton $w={24} aria-label="Quick search"><Icon name="quick" size={22} /></BarButton>
            <BarButton $w={39} aria-label="Settings"><Icon name="hex" /></BarButton>
            <BarButton $w={26} aria-label="Fullscreen"><Icon name="fullscreen" /></BarButton>
            <BarButton $w={37} aria-label="Snapshot"><Icon name="camera" /></BarButton>
            <Pill $w={62}>Negocie</Pill>
            <Pill $w={63} $light>Publicar</Pill>
          </TopBar>

          <Body>
            <Side $top={4}>
              {left1.map((n, i) => <Tool key={n} $on={i === 0} aria-label={n}><Icon name={n} /></Tool>)}
              <SideRule />
              <Tool aria-label="Measure"><Icon name="ruler" size={22} /></Tool>
              <Tool aria-label="Zoom"><Icon name="zoom" size={22} /></Tool>
              <SideRule />
              {left3.map((n) => <Tool key={n} aria-label={n}><Icon name={n} size={22} /></Tool>)}
              <SideRule />
              <Tool aria-label="Remove"><Icon name="trash" /></Tool>
              <FavButton aria-label="Favorite tools"><Icon name="star" /></FavButton>
            </Side>

            <Center>
              <ChartArea>
                <Chart />
                <Scale>
                  {prices.map((p) => <span key={p}>{p}</span>)}
                  <PriceTag $y={172} $bg="#8a12a0">660,42</PriceTag>
                  <PriceTag $y={308} $bg="#3d3d47" $h={17}>657,02</PriceTag>
                  <PriceTag $y={326} $bg="#7fff00" $fg="#2c6404" $h={25}>656,64<br />00:13</PriceTag>
                  <AddAtPrice aria-label="Add at price"><Icon name="plusCircle" size={18} /></AddAtPrice>
                  <Currency>
                    <select aria-label="Currency" defaultValue="USD"><option>USD</option></select>
                    <Icon name="down" size={20} />
                  </Currency>
                </Scale>
                <TimeAxis />
                <AxisSettings aria-label="Axis settings"><Icon name="hex" size={16} weight={1.500} /></AxisSettings>

                <Legend>
                  <TitleRow><Logo>S</Logo>State Street SPDR S&amp;P 500 ETF · 45s · NYSE Arca
                    <svg width="14" height="14" viewBox="0 0 14 14"><circle cx="9" cy="7" r="6" fill="#3a1f08" /><path d="M7 4l2 3 2-3M6 9l3-2 3 2" stroke="#d98a2b" fill="none" /></svg>
                  </TitleRow>
                  <Trade>
                    <TradeButton $w={52} $c="#d42a50"><b>656,63</b>VENDER</TradeButton>
                    0,03
                    <TradeButton $w={60} $c="#3b57e8"><b>656,66</b>COMPRAR</TradeButton>
                  </Trade>
                  <Fold><Icon name="down" size={20} />17</Fold>
                </Legend>
                <DrawBar>
                  <GripHandle><Icon name="grip" size={18} /></GripHandle>
                  {draw.map((n) => <DrawTool key={n} aria-label={n}><Icon name={n} size={22} /></DrawTool>)}
                </DrawBar>
              </ChartArea>
              <RangeBar>
                {['1D', '5D', '1M', '3M', '6M', 'YTD', '1A', '5A', 'Todos'].map((r) => <RangeButton key={r}>{r}</RangeButton>)}
                <Sep $m={5} />
                <IconButton aria-label="Go to date" $w={26}><Icon name="goto" size={22} /></IconButton>
                <Grow />
                <RangeButton>09:00:31 UTC-4</RangeButton>
                <RangeButton>HTE</RangeButton>
                <Sep $m={5} />
                <RangeButton>ADJ</RangeButton>
              </RangeBar>
            </Center>

            <Side $top={1}>
              <Widget aria-label="Watchlist"><Icon name="watchlist" /></Widget>
              <Widget aria-label="Alerts"><Icon name="clock" /><Badge $top={-2} $right={-1} $w={21}>99+</Badge></Widget>
              <Widget aria-label="Object tree"><Icon name="layers" /></Widget>
              <Widget aria-label="Chats"><Icon name="chat" /><Badge $top={-1} $right={-1}>1</Badge></Widget>
              <Grow />
              <Widget aria-label="Screener"><Icon name="radar" /></Widget>
              <Widget aria-label="Pine"><Icon name="pyramid" /></Widget>
              <Widget aria-label="Calendar"><Icon name="calendar" /></Widget>
              <Widget aria-label="News"><Icon name="feed" /></Widget>
              <Widget aria-label="Notifications"><Icon name="bell" /></Widget>
              <Widget aria-label="Apps" $light><Icon name="apps" /></Widget>
              <SideRule />
              <Widget aria-label="Help"><Icon name="help" /></Widget>
            </Side>
          </Body>
        </Page>
      </Frame>

      <Taskbar>
        <Weather>
          <svg width="22" height="20" viewBox="0 0 22 20"><circle cx="12" cy="10" r="8" fill="#f5922a" /><circle cx="12" cy="9" r="5" fill="#ffb545" /><path d="M3 8a3 3 0 0 1 1-5.500 4 4 0 0 1 7 1Q13 8 9 8zM12 19a3 3 0 0 1 0-5q3-3 6-.5 4 .5 3 5.500z" fill="#bcd6f5" /></svg>
          <div><span>10°C</span><span>Parc. soleado</span></div>
        </Weather>
        <Dock>
          <DockButton aria-label="Start">{appIcons.start}</DockButton>
          <SearchBox><Icon name="search" weight={1.500} /><input aria-label="Buscar" placeholder="Buscar" /></SearchBox>
          <DockButton aria-label="Task view">{appIcons.tasks}</DockButton>
          <DockButton aria-label="Copilot"><Copilot size={20} /></DockButton>
          <DockButton aria-label="Files" $mark="dot">{appIcons.files}</DockButton>
          <DockButton aria-label="Store">{appIcons.store}</DockButton>
          <DockButton aria-label="Scanner">{appIcons.scanner}</DockButton>
          <DockButton aria-label="Xbox">{appIcons.xbox}</DockButton>
          <DockButton aria-label="Mail">{appIcons.mail}</DockButton>
          <DockButton aria-label="Edge" $on $mark="bar">{appIcons.edge}</DockButton>
          <DockButton aria-label="OBS" $mark="dot">{appIcons.obs}</DockButton>
        </Dock>
        <Tray>
          <IconButton aria-label="Hidden icons" $w={26}><Icon name="up" size={22} weight={1.400} /></IconButton>
          <IconButton aria-label="Cloud" $w={27}>
            <svg width="16" height="14" viewBox="0 0 16 14"><path d="M3 10a3 3 0 0 1 0-6 4.500 4.500 0 0 1 8 0q3 1 2 6z" fill="#f4ecee" /><circle cx="11" cy="9" r="4.500" fill="#1579cf" /><path d="M11 8v3.500M11 6.300v.9" stroke="#fff" /></svg>
          </IconButton>
          <IconButton aria-label="Microphone" $w={27} $c="#c9a3d8"><Icon name="mic" size={22} /></IconButton>
          <IconButton aria-label="Network" $w={22}><Icon name="wifi" size={20} weight={1.400} /></IconButton>
          <IconButton aria-label="Volume" $w={20}><Icon name="mute" size={20} weight={1.200} /></IconButton>
          <IconButton aria-label="Battery" $w={24}><Icon name="battery" size={22} weight={1.200} /></IconButton>
          <Clock>9:00<br />20/03/2026</Clock>
        </Tray>
      </Taskbar>
    </Shell>
  );
}
